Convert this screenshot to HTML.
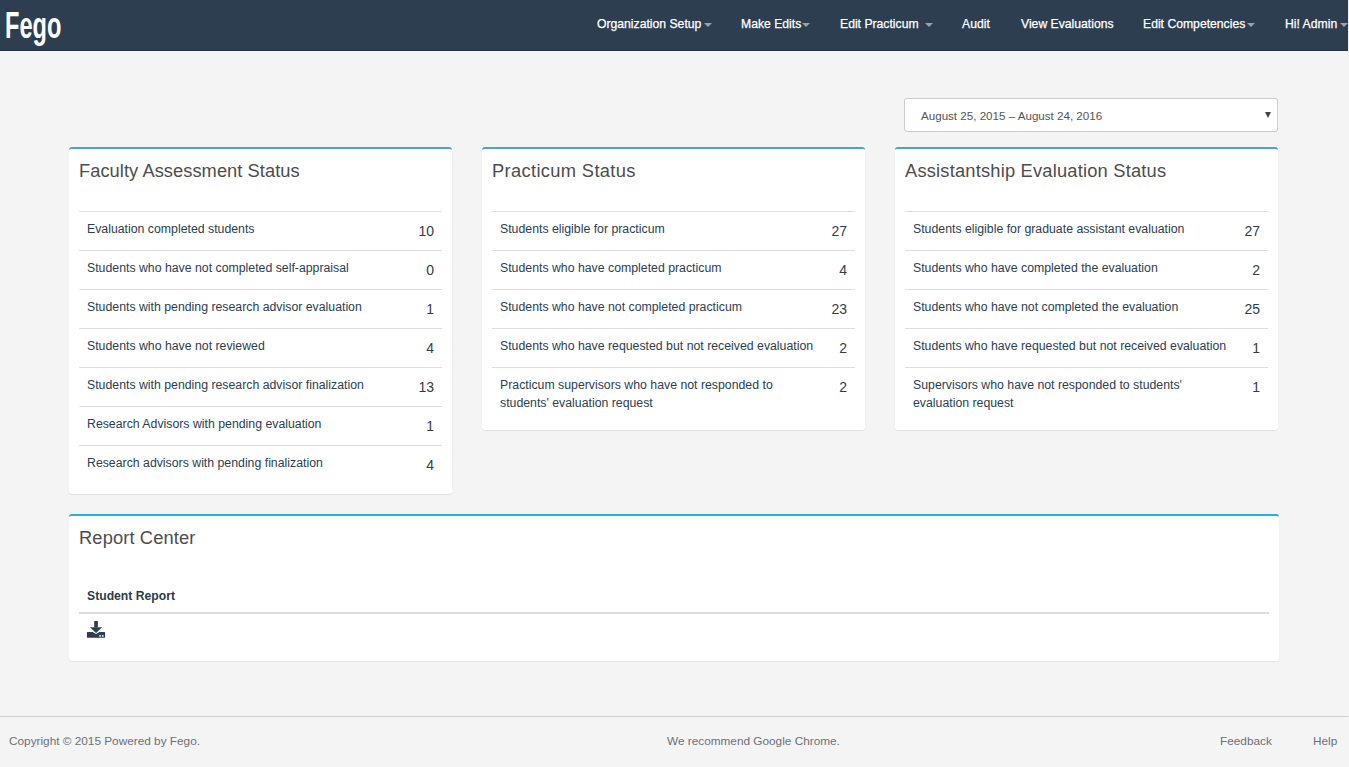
<!DOCTYPE html>
<html><head><meta charset="utf-8">
<style>
*{box-sizing:border-box;margin:0;padding:0}
html,body{width:1349px;height:767px;overflow:hidden;background:#f4f4f4;font-family:"Liberation Sans",sans-serif;}
.nav{position:absolute;left:0;top:0;width:1348px;height:51px;background:#2c3e50;border-bottom:1px solid #243341}
.logo{position:absolute;left:5px;top:6px;font-family:"Liberation Sans",sans-serif;font-weight:bold;font-size:36px;color:#fff;transform:scaleX(0.655);transform-origin:0 0;line-height:40px;letter-spacing:0}
.ni{position:absolute;top:17px;font-size:12.2px;line-height:14px;color:#fff;white-space:nowrap;-webkit-text-stroke:0.25px #fff}
.caret{position:absolute;top:23px;width:0;height:0;border-left:4px solid transparent;border-right:4px solid transparent;border-top:4px solid #9aa3ab}
.sel{position:absolute;left:904px;top:98px;width:374px;height:34px;background:#fff;border:1px solid #ccc;border-radius:3px}
.sel span{position:absolute;left:16px;top:10px;font-size:11.6px;color:#555;line-height:14px;white-space:nowrap}
.sel i{position:absolute;left:360px;top:13px;width:0;height:0;border-left:3px solid transparent;border-right:3px solid transparent;border-top:6px solid #444}
.card{position:absolute;background:#fff;border-top:2px solid #4aa6c2;border-radius:3px;box-shadow:0 1px 1px rgba(0,0,0,.08)}
.card h3{position:absolute;left:10px;top:11px;font-weight:normal;font-size:18.3px;line-height:22px;color:#4d4d4d;white-space:nowrap}
table{position:absolute;left:10px;top:62px;width:363px;border-collapse:collapse}
td{border-top:1px solid #dedede;vertical-align:top;padding:8px 8px;color:#2c3e50}
td.l{font-size:12.3px;line-height:18px;white-space:nowrap}
td.n{font-size:14px;line-height:22px;text-align:right;padding-right:8px;color:#363c45;width:40px}
.foot{position:absolute;left:0;top:716px;width:1348px;border-top:1px solid #cfcfcf}
.ft{position:absolute;top:734px;font-size:11.8px;line-height:14px;color:#6b7077;white-space:nowrap}
</style></head><body>
<div class="nav">
  <div class="logo">Fego</div>
  <div class="ni" style="left:597px">Organization Setup</div><div class="caret" style="left:704px"></div>
  <div class="ni" style="left:741px">Make Edits</div><div class="caret" style="left:802px"></div>
  <div class="ni" style="left:840px">Edit Practicum</div><div class="caret" style="left:925px"></div>
  <div class="ni" style="left:962px">Audit</div>
  <div class="ni" style="left:1021px">View Evaluations</div>
  <div class="ni" style="left:1143px">Edit Competencies</div><div class="caret" style="left:1247px"></div>
  <div class="ni" style="left:1285px">Hi! Admin</div><div class="caret" style="left:1340px"></div>
</div>

<div class="sel"><span>August 25, 2015 – August 24, 2016</span><i></i></div>

<div class="card" style="left:69px;top:147px;width:383px;height:347px">
  <h3 style="letter-spacing:0.05px">Faculty Assessment Status</h3>
  <table>
    <tr><td class="l">Evaluation completed students</td><td class="n">10</td></tr>
    <tr><td class="l">Students who have not completed self-appraisal</td><td class="n">0</td></tr>
    <tr><td class="l">Students with pending research advisor evaluation</td><td class="n">1</td></tr>
    <tr><td class="l">Students who have not reviewed</td><td class="n">4</td></tr>
    <tr><td class="l">Students with pending research advisor finalization</td><td class="n">13</td></tr>
    <tr><td class="l">Research Advisors with pending evaluation</td><td class="n">1</td></tr>
    <tr><td class="l">Research advisors with pending finalization</td><td class="n">4</td></tr>
  </table>
</div>

<div class="card" style="left:482px;top:147px;width:383px;height:283px">
  <h3 style="letter-spacing:0.35px">Practicum Status</h3>
  <table>
    <tr><td class="l">Students eligible for practicum</td><td class="n">27</td></tr>
    <tr><td class="l">Students who have completed practicum</td><td class="n">4</td></tr>
    <tr><td class="l">Students who have not completed practicum</td><td class="n">23</td></tr>
    <tr><td class="l">Students who have requested but not received evaluation</td><td class="n">2</td></tr>
    <tr><td class="l">Practicum supervisors who have not responded to<br>students' evaluation request</td><td class="n">2</td></tr>
  </table>
</div>

<div class="card" style="left:895px;top:147px;width:383px;height:283px">
  <h3 style="letter-spacing:0.2px">Assistantship Evaluation Status</h3>
  <table>
    <tr><td class="l">Students eligible for graduate assistant evaluation</td><td class="n">27</td></tr>
    <tr><td class="l">Students who have completed the evaluation</td><td class="n">2</td></tr>
    <tr><td class="l">Students who have not completed the evaluation</td><td class="n">25</td></tr>
    <tr><td class="l">Students who have requested but not received evaluation</td><td class="n">1</td></tr>
    <tr><td class="l">Supervisors who have not responded to students'<br>evaluation request</td><td class="n">1</td></tr>
  </table>
</div>

<div class="card" style="left:69px;top:514px;width:1210px;height:147px;border-top-color:#22b3d8">
  <h3 style="letter-spacing:0.13px">Report Center</h3>
  <div style="position:absolute;left:10px;top:66px;width:1190px;height:32px;border-bottom:2px solid #ddd">
    <span style="position:absolute;left:8px;top:7px;font-weight:bold;font-size:12.2px;line-height:14px;color:#2d3a48">Student Report</span>
  </div>
  <svg style="position:absolute;left:13px;top:100px" width="28" height="26" viewBox="0 0 28 26">
    <rect x="12.2" y="5" width="3.7" height="6.4" fill="#2c3e50"/>
    <path d="M8 11.2H20.1L14.05 17.1Z" fill="#2c3e50"/>
    <path d="M5.4 16H10.6L14.05 18.1L17.5 16H22.6Q23.1 16 23.1 16.5V21.3Q23.1 21.8 22.6 21.8H5.4Q4.9 21.8 4.9 21.3V16.5Q4.9 16 5.4 16Z" fill="#2c3e50"/>
    <rect x="17.2" y="19.1" width="1.7" height="1.6" fill="#e8ecef"/>
    <rect x="19.9" y="19.1" width="1.7" height="1.6" fill="#e8ecef"/>
  </svg>
</div>

<div class="foot"></div>
<div class="ft" style="left:9px">Copyright © 2015 Powered by Fego.</div>
<div class="ft" style="left:667px">We recommend Google Chrome.</div>
<div class="ft" style="left:1220px">Feedback</div>
<div class="ft" style="left:1313px">Help</div>
</body></html>
